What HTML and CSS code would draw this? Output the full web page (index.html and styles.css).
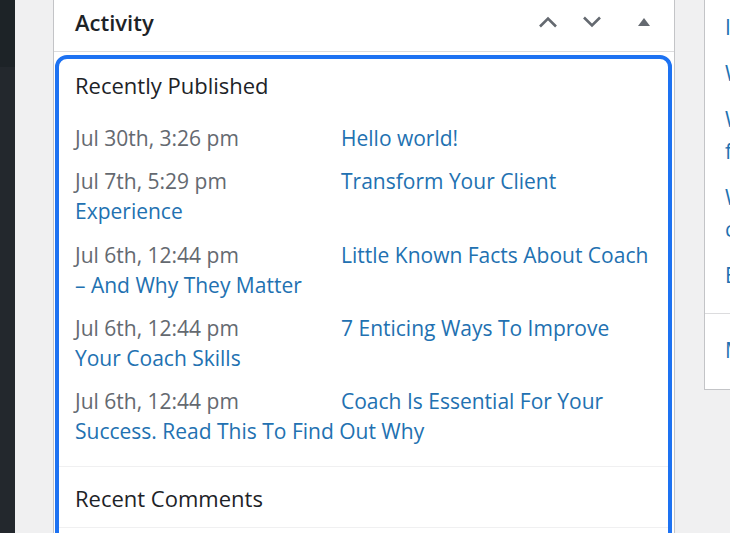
FILE: index.html
```html
<!DOCTYPE html>
<html lang="en">
<head>
<meta charset="utf-8">
<title>Dashboard</title>
<link rel="stylesheet" href="styles.css">
</head>
<body>
<div class="page">
  <aside class="adminmenu">
    <div class="menu-top"></div>
  </aside>
  <main class="columns">
    <section class="postbox activity">
      <header class="postbox-header">
        <h2 class="hndle">Activity</h2>
        <div class="handle-actions">
          <button class="handle-btn up" aria-label="Move up">
            <svg width="20" height="12" viewBox="0 0 20 12"><path d="M2 10.5 L10 2.5 L18 10.5" fill="none" stroke="#646970" stroke-width="2.6"/></svg>
          </button>
          <button class="handle-btn down" aria-label="Move down">
            <svg width="20" height="12" viewBox="0 0 20 12"><path d="M2 1.5 L10 9.5 L18 1.5" fill="none" stroke="#646970" stroke-width="2.6"/></svg>
          </button>
          <button class="handle-btn toggle" aria-label="Toggle panel">
            <svg width="14" height="10" viewBox="0 0 14 10"><path d="M1 9 L7 1 L13 9 Z" fill="#646970"/></svg>
          </button>
        </div>
      </header>
      <div class="inside">
        <div class="activity-block published">
          <h3>Recently Published</h3>
          <ul>
            <li><span>Jul 30th, 3:26 pm</span><a href="#">Hello world!</a></li>
            <li><span>Jul 7th, 5:29 pm</span><a href="#">Transform Your Client Experience</a></li>
            <li><span>Jul 6th, 12:44 pm</span><a href="#">Little Known Facts About Coach – And Why They Matter</a></li>
            <li><span>Jul 6th, 12:44 pm</span><a href="#">7 Enticing Ways To Improve Your Coach Skills</a></li>
            <li><span>Jul 6th, 12:44 pm</span><a href="#">Coach Is Essential For Your Success. Read This To Find Out Why</a></li>
          </ul>
        </div>
        <div class="activity-block comments">
          <h3>Recent Comments</h3>
        </div>
      </div>
    </section>
    <section class="postbox side">
      <ul class="side-list">
        <li><a href="#">Improve your site</a></li>
        <li><a href="#">WordPress Events</a></li>
        <li><a href="#"><span class="ln">WordPress Meetup</span><span class="ln">for developers</span></a></li>
        <li><a href="#"><span class="ln">WP Briefing</span><span class="ln">contributors</span></a></li>
        <li><a href="#">Events near you</a></li>
      </ul>
      <div class="side-foot"><a href="#">Meetups</a></div>
    </section>
  </main>
</div>
</body>
</html>
```

FILE: styles.css
```css
html, body {
  margin: 0;
  padding: 0;
}
body {
  background: #f0f0f1;
  font-family: "Open Sans", "Noto Sans", sans-serif;
  color: #1d2327;
}
.page {
  display: flex;
  height: 533px;
  overflow: hidden;
}
.adminmenu {
  width: 15px;
  flex: none;
  background: #23282d;
}
.menu-top {
  height: 67px;
  background: #1d2327;
}
.columns {
  flex: 1;
  display: flex;
  align-items: flex-start;
  padding-left: 38px;
  gap: 29px;
  min-width: 0;
}
.postbox {
  background: #fff;
  border: 1px solid #c3c4c7;
  border-top: none;
  box-sizing: border-box;
}
.activity {
  width: 622px;
  flex: none;
}
.postbox-header {
  display: flex;
  justify-content: space-between;
  align-items: flex-start;
  height: 52px;
  border-bottom: 1px solid #dcdcde;
  box-sizing: border-box;
}
.hndle {
  margin: 0;
  padding-left: 21px;
  font-size: 22px;
  font-weight: 600;
  line-height: 45px;
}
.handle-actions {
  display: flex;
  align-items: center;
  height: 44px;
  padding-right: 23px;
}
.handle-btn {
  border: 0;
  background: none;
  padding: 0;
  margin: 0;
  display: flex;
  align-items: center;
  justify-content: center;
}
.handle-btn.up {
  margin-right: 24px;
}
.handle-btn.down {
  margin-right: 35px;
}
.inside {
  margin: 3px 2px 0 1px;
  border: 4px solid #1d72f2;
  border-radius: 12px;
  height: 520px;
}
.activity-block h3 {
  margin: 0;
  font-size: 22px;
  font-weight: 400;
  line-height: 30px;
}
.published {
  padding: 11px 16px 7px;
  border-bottom: 1px solid #f0f0f1;
}
.published ul {
  list-style: none;
  margin: 23px 0 0;
  padding: 0;
}
.published li {
  font-size: 21px;
  line-height: 30px;
  margin-bottom: 13.3px;
}
.published li span {
  display: inline-block;
  min-width: 261px;
  margin-right: 5px;
  color: #646970;
}
a {
  color: #2271b1;
  text-decoration: none;
}
.comments {
  padding: 16px 16px 14px;
  border-bottom: 1px solid #f0f0f1;
}
.side {
  flex: none;
  width: 300px;
  height: 390px;
}
.side-list {
  list-style: none;
  margin: 0;
  padding: 11px 20px 0;
}
.side-list li {
  font-size: 21px;
  line-height: 32px;
  margin-bottom: 14px;
  white-space: nowrap;
}
.side-list .ln {
  display: block;
}
.side-foot {
  border-top: 1px solid #dcdcde;
  margin-top: 22px;
  padding: 20px 20px;
  font-size: 21px;
  line-height: 32px;
}
```
